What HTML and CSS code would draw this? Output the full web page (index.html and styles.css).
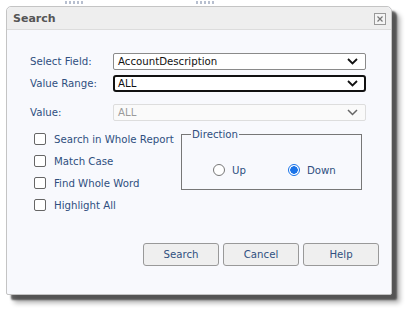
FILE: index.html
```html
<!DOCTYPE html>
<html>
<head>
<meta charset="utf-8">
<link rel="stylesheet" href="styles.css">
</head>
<body>
<div class="backdrop">
  <span class="ghost g1"></span>
  <span class="ghost g2"></span>
</div>
<div class="dialog">
  <div class="titlebar">
    <span class="title">Search</span>
    <span class="close"><svg width="12" height="12" viewBox="0 0 12 12"><rect x="0.5" y="0.5" width="11" height="11" fill="#f4f4f4" stroke="#999"/><path d="M3.5 3.5 L8.5 8.5 M8.5 3.5 L3.5 8.5" stroke="#777" stroke-width="1.2"/></svg></span>
  </div>
  <div class="content">
    <div class="fields">
      <label class="lbl">Select Field:</label>
      <div class="select">AccountDescription<svg class="chev" width="11" height="7" viewBox="0 0 11 7"><path d="M1 1 L5.5 5.5 L10 1" fill="none" stroke="#111" stroke-width="1.8"/></svg></div>
      <label class="lbl">Value Range:</label>
      <div class="select focused">ALL<svg class="chev" width="11" height="7" viewBox="0 0 11 7"><path d="M1 1 L5.5 5.5 L10 1" fill="none" stroke="#111" stroke-width="1.8"/></svg></div>
      <label class="lbl spaced">Value:</label>
      <div class="select disabled spaced">ALL<svg class="chev" width="11" height="7" viewBox="0 0 11 7"><path d="M1 1 L5.5 5.5 L10 1" fill="none" stroke="#666" stroke-width="1.5"/></svg></div>
    </div>
    <div class="options">
      <div class="checks">
        <div class="check"><span class="box"></span>Search in Whole Report</div>
        <div class="check"><span class="box"></span>Match Case</div>
        <div class="check"><span class="box"></span>Find Whole Word</div>
        <div class="check"><span class="box"></span>Highlight All</div>
      </div>
      <fieldset class="direction">
        <legend>Direction</legend>
        <div class="radios">
          <div class="radio"><span class="dot"></span>Up</div>
          <div class="radio"><span class="dot on"></span>Down</div>
        </div>
      </fieldset>
    </div>
    <div class="buttons">
      <button class="btn">Search</button>
      <button class="btn">Cancel</button>
      <button class="btn">Help</button>
    </div>
  </div>
</div>
</body>
</html>
```
FILE: styles.css
```css
html, body {
  margin: 0;
  padding: 0;
  background: #ffffff;
  width: 407px;
  height: 312px;
  overflow: hidden;
  font-family: "DejaVu Sans", Verdana, sans-serif;
}
.backdrop {
  position: absolute;
  left: 0;
  top: 0;
  width: 407px;
  height: 312px;
}
.ghost {
  position: absolute;
  top: 1px;
  height: 3px;
  width: 18px;
  background: repeating-linear-gradient(90deg, #b7bfcf 0 2px, transparent 2px 4px);
}
.g1 { left: 65px; }
.g2 { left: 196px; }
.dialog {
  position: absolute;
  left: 6px;
  top: 6px;
  width: 384px;
  height: 287px;
  background: #f8f9fd;
  border: 1px solid #c4c4c4;
  border-radius: 5px 5px 2px 2px;
  box-shadow: 5px 5px 2px rgba(60,60,60,0.8), 8px 8px 5px rgba(0,0,0,0.3);
  display: flex;
  flex-direction: column;
}
.titlebar {
  height: 22px;
  background: #eeeeee;
  border-bottom: 1px solid #dcdcdc;
  border-radius: 5px 5px 0 0;
  display: flex;
  align-items: center;
  justify-content: space-between;
  padding: 0 5px 0 6px;
}
.title {
  font-weight: bold;
  font-size: 11px;
  color: #555555;
}
.close {
  display: flex;
  margin-top: 1px;
}
.content {
  padding: 23px 0 0 23px;
  display: flex;
  flex-direction: column;
  font-size: 10.2px;
}
.fields {
  display: grid;
  grid-template-columns: 83px 253px;
  row-gap: 5px;
  align-items: center;
}
.lbl {
  color: #2f4f7f;
}
.spaced { margin-top: 7px; }
.select {
  position: relative;
  box-sizing: border-box;
  height: 17px;
  border: 1px solid #8a8a8a;
  border-radius: 2px;
  background: #fff;
  color: #111;
  padding-left: 4px;
  line-height: 15px;
}
.select.focused {
  border: 2px solid #111;
  border-radius: 3px;
  padding-left: 3px;
  line-height: 13px;
}
.select.disabled {
  border-color: #dddddd;
  background: #fafafa;
  color: #9a9a9a;
}
.chev {
  position: absolute;
  right: 7px;
  top: 4px;
}
.focused .chev { right: 6px; top: 3px; }
.options {
  display: flex;
  margin-top: 12px;
}
.checks {
  display: flex;
  flex-direction: column;
  gap: 10px;
  padding-left: 4px;
  width: 147px;
}
.check {
  display: flex;
  align-items: center;
  color: #2f4f7f;
  height: 12px;
  white-space: nowrap;
}
.box {
  width: 10px;
  height: 10px;
  border: 1px solid #666;
  border-radius: 2px;
  background: #fff;
  margin-right: 8px;
  flex: none;
}
.direction {
  margin: -4px 0 0 0;
  padding: 0;
  width: 181px;
  height: 61px;
  box-sizing: border-box;
  border: 1px solid #777;
}
legend {
  color: #2f4f7f;
  padding: 0 1px;
  margin-left: 9px;
  line-height: 11px;
}
.radios {
  display: flex;
  padding: 24px 0 0 31px;
  gap: 42px;
}
.radio {
  display: flex;
  align-items: center;
  color: #2f4f7f;
}
.dot {
  box-sizing: border-box;
  width: 12px;
  height: 12px;
  border: 1px solid #777;
  border-radius: 50%;
  background: #fff;
  margin-right: 7px;
}
.dot.on {
  border: 1px solid #1a73e8;
  background: radial-gradient(circle, #1a73e8 0 3.5px, #fff 4px);
}
.buttons {
  display: flex;
  gap: 4px;
  margin: 32px 0 0 113px;
}
.btn {
  width: 76px;
  height: 23px;
  background: #efefef;
  border: 1px solid #999;
  border-radius: 3px;
  font-family: "DejaVu Sans", Verdana, sans-serif;
  font-size: 10.2px;
  color: #2f4f7f;
  padding: 0;
}
```
